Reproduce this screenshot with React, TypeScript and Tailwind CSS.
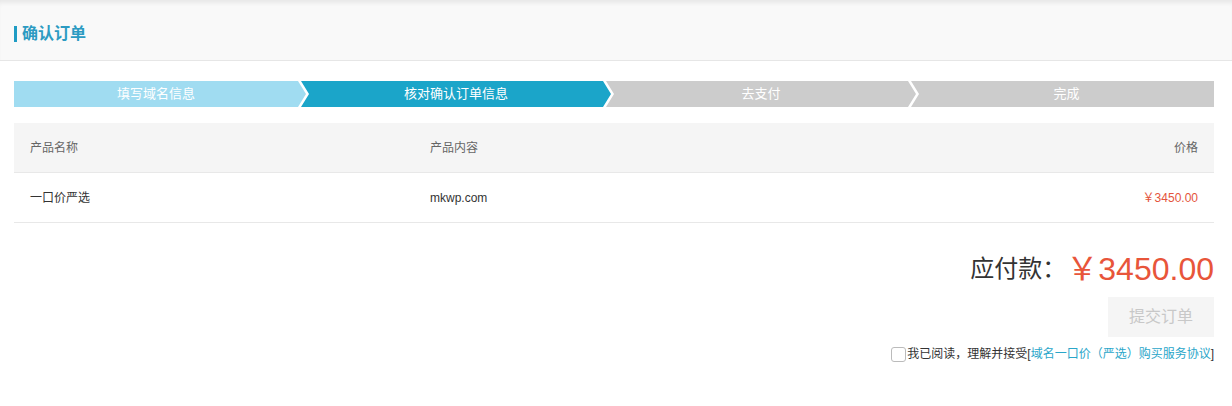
import React from "react";

const font = { fontFamily: '"Liberation Sans", "Noto Sans CJK SC", sans-serif' };

export default function App() {
  return (
    <div className="w-[1232px] h-[406px] bg-white text-[#333]" style={font}>
      <div className="h-[61px] bg-[#f9f9f9] border-b border-[#e6e6e6] shadow-[inset_0_5px_4px_-2px_rgba(0,0,0,0.07)] flex items-center pl-[14px] pt-[7px]">
        <span className="w-[3px] h-[16px] bg-[#1f9cc4] mr-[5px]" />
        <span className="text-[16px] font-bold text-[#2c9bc2] leading-none">确认订单</span>
      </div>

      <div className="w-[1200px] ml-[14px]">
        <div className="flex mt-[20px] h-[26px] text-[13px] text-white">
          <div
            className="w-[292px] bg-[#a0dcf1] flex items-center justify-center pr-[8px]"
            style={{ clipPath: "polygon(0 0, calc(100% - 8px) 0, 100% 50%, calc(100% - 8px) 100%, 0 100%)" }}
          >
            填写域名信息
          </div>
          <div
            className="w-[310px] ml-[-5px] bg-[#1ba5c9] flex items-center justify-center pl-[8px] pr-[8px]"
            style={{ clipPath: "polygon(0 0, calc(100% - 8px) 0, 100% 50%, calc(100% - 8px) 100%, 0 100%, 8px 50%)" }}
          >
            核对确认订单信息
          </div>
          <div
            className="w-[310px] ml-[-5px] bg-[#cccccc] flex items-center justify-center pl-[8px] pr-[8px]"
            style={{ clipPath: "polygon(0 0, calc(100% - 8px) 0, 100% 50%, calc(100% - 8px) 100%, 0 100%, 8px 50%)" }}
          >
            去支付
          </div>
          <div
            className="w-[303px] ml-[-5px] bg-[#cccccc] flex items-center justify-center pl-[8px]"
            style={{ clipPath: "polygon(0 0, 100% 0, 100% 100%, 0 100%, 8px 50%)" }}
          >
            完成
          </div>
        </div>

        <div className="mt-[16px] text-[12px]">
          <div className="h-[50px] bg-[#f5f5f5] border-b border-[#e8e8e8] flex items-center text-[#666]">
            <div className="w-[416px] pl-[16px]">产品名称</div>
            <div className="flex-1">产品内容</div>
            <div className="pr-[16px]">价格</div>
          </div>
          <div className="h-[50px] border-b border-[#e8e8e8] flex items-center text-[#333]">
            <div className="w-[416px] pl-[16px]">一口价严选</div>
            <div className="flex-1">mkwp.com</div>
            <div className="pr-[16px] text-[#e4543c]">￥3450.00</div>
          </div>
        </div>

        <div className="flex justify-end items-center mt-[26px] h-[40px]">
          <span className="text-[24px] text-[#333] leading-none">应付款：</span>
          <span className="text-[32px] text-[#e8553a] leading-none">￥3450.00</span>
        </div>

        <div className="flex justify-end mt-[8px]">
          <div className="w-[106px] h-[40px] bg-[#f5f5f5] text-[#c8c8c8] text-[16px] flex items-center justify-center">
            提交订单
          </div>
        </div>

        <div className="flex justify-end items-center mt-[8px] text-[12px] text-[#333]">
          <span className="w-[15px] h-[15px] border border-[#bbb] rounded-[3px] bg-white mr-[1px]" />
          <span>我已阅读，理解并接受[</span>
          <span className="text-[#2aa6c9]">域名一口价（严选）购买服务协议</span>
          <span>]</span>
        </div>
      </div>
    </div>
  );
}
